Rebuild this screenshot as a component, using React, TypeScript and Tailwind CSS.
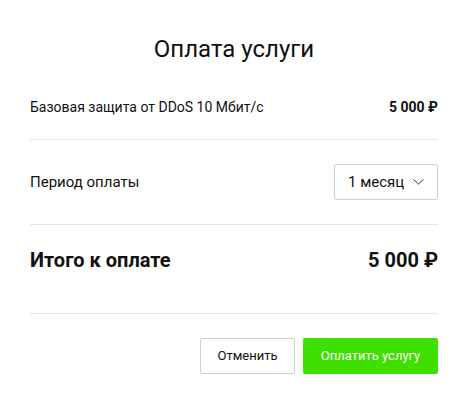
export default function App() {
  return (
    <div className="w-[473px] h-[408px] bg-white pl-[30px] pr-[35px] font-['Roboto',sans-serif] text-[#111]">
      {/* Title */}
      <h1 className="pt-[35px] text-center text-[24px] leading-[28px] font-normal">
        Оплата услуги
      </h1>

      {/* Service row */}
      <div className="mt-[34px] pb-[22px] flex items-center justify-between border-b border-[#e5e5e5] text-[14px] leading-[20px]">
        <span>Базовая защита от DDoS 10 Мбит/с</span>
        <span className="font-bold">5 000 ₽</span>
      </div>

      {/* Period row */}
      <div className="py-[24px] flex items-center justify-between border-b border-[#e5e5e5]">
        <span className="text-[15px] leading-[20px]">Период оплаты</span>
        <button className="w-[104px] h-[36px] flex items-center justify-between pl-[13px] pr-[13px] border border-[#cfcfcf] rounded-[2px] text-[15px] bg-white">
          <span>1 месяц</span>
          <svg width="11" height="6" viewBox="0 0 11 6" fill="none">
            <path d="M0.5 0.5L5.5 5L10.5 0.5" stroke="#333" strokeWidth="1" />
          </svg>
        </button>
      </div>

      {/* Total */}
      <div className="pt-[21px] pb-[39px] flex items-center justify-between border-b border-[#e5e5e5] text-[20px] leading-[28px] font-bold">
        <span>Итого к оплате</span>
        <span>5 000 ₽</span>
      </div>

      {/* Actions */}
      <div className="mt-[24px] flex justify-end gap-[8px]">
        <button className="w-[95px] h-[36px] border border-[#cfcfcf] rounded-[2px] text-[13px] bg-white text-[#111]">
          Отменить
        </button>
        <button className="w-[135px] h-[36px] rounded-[2px] bg-[#3ee000] text-[13px] text-white">
          Оплатить услугу
        </button>
      </div>
    </div>
  );
}
